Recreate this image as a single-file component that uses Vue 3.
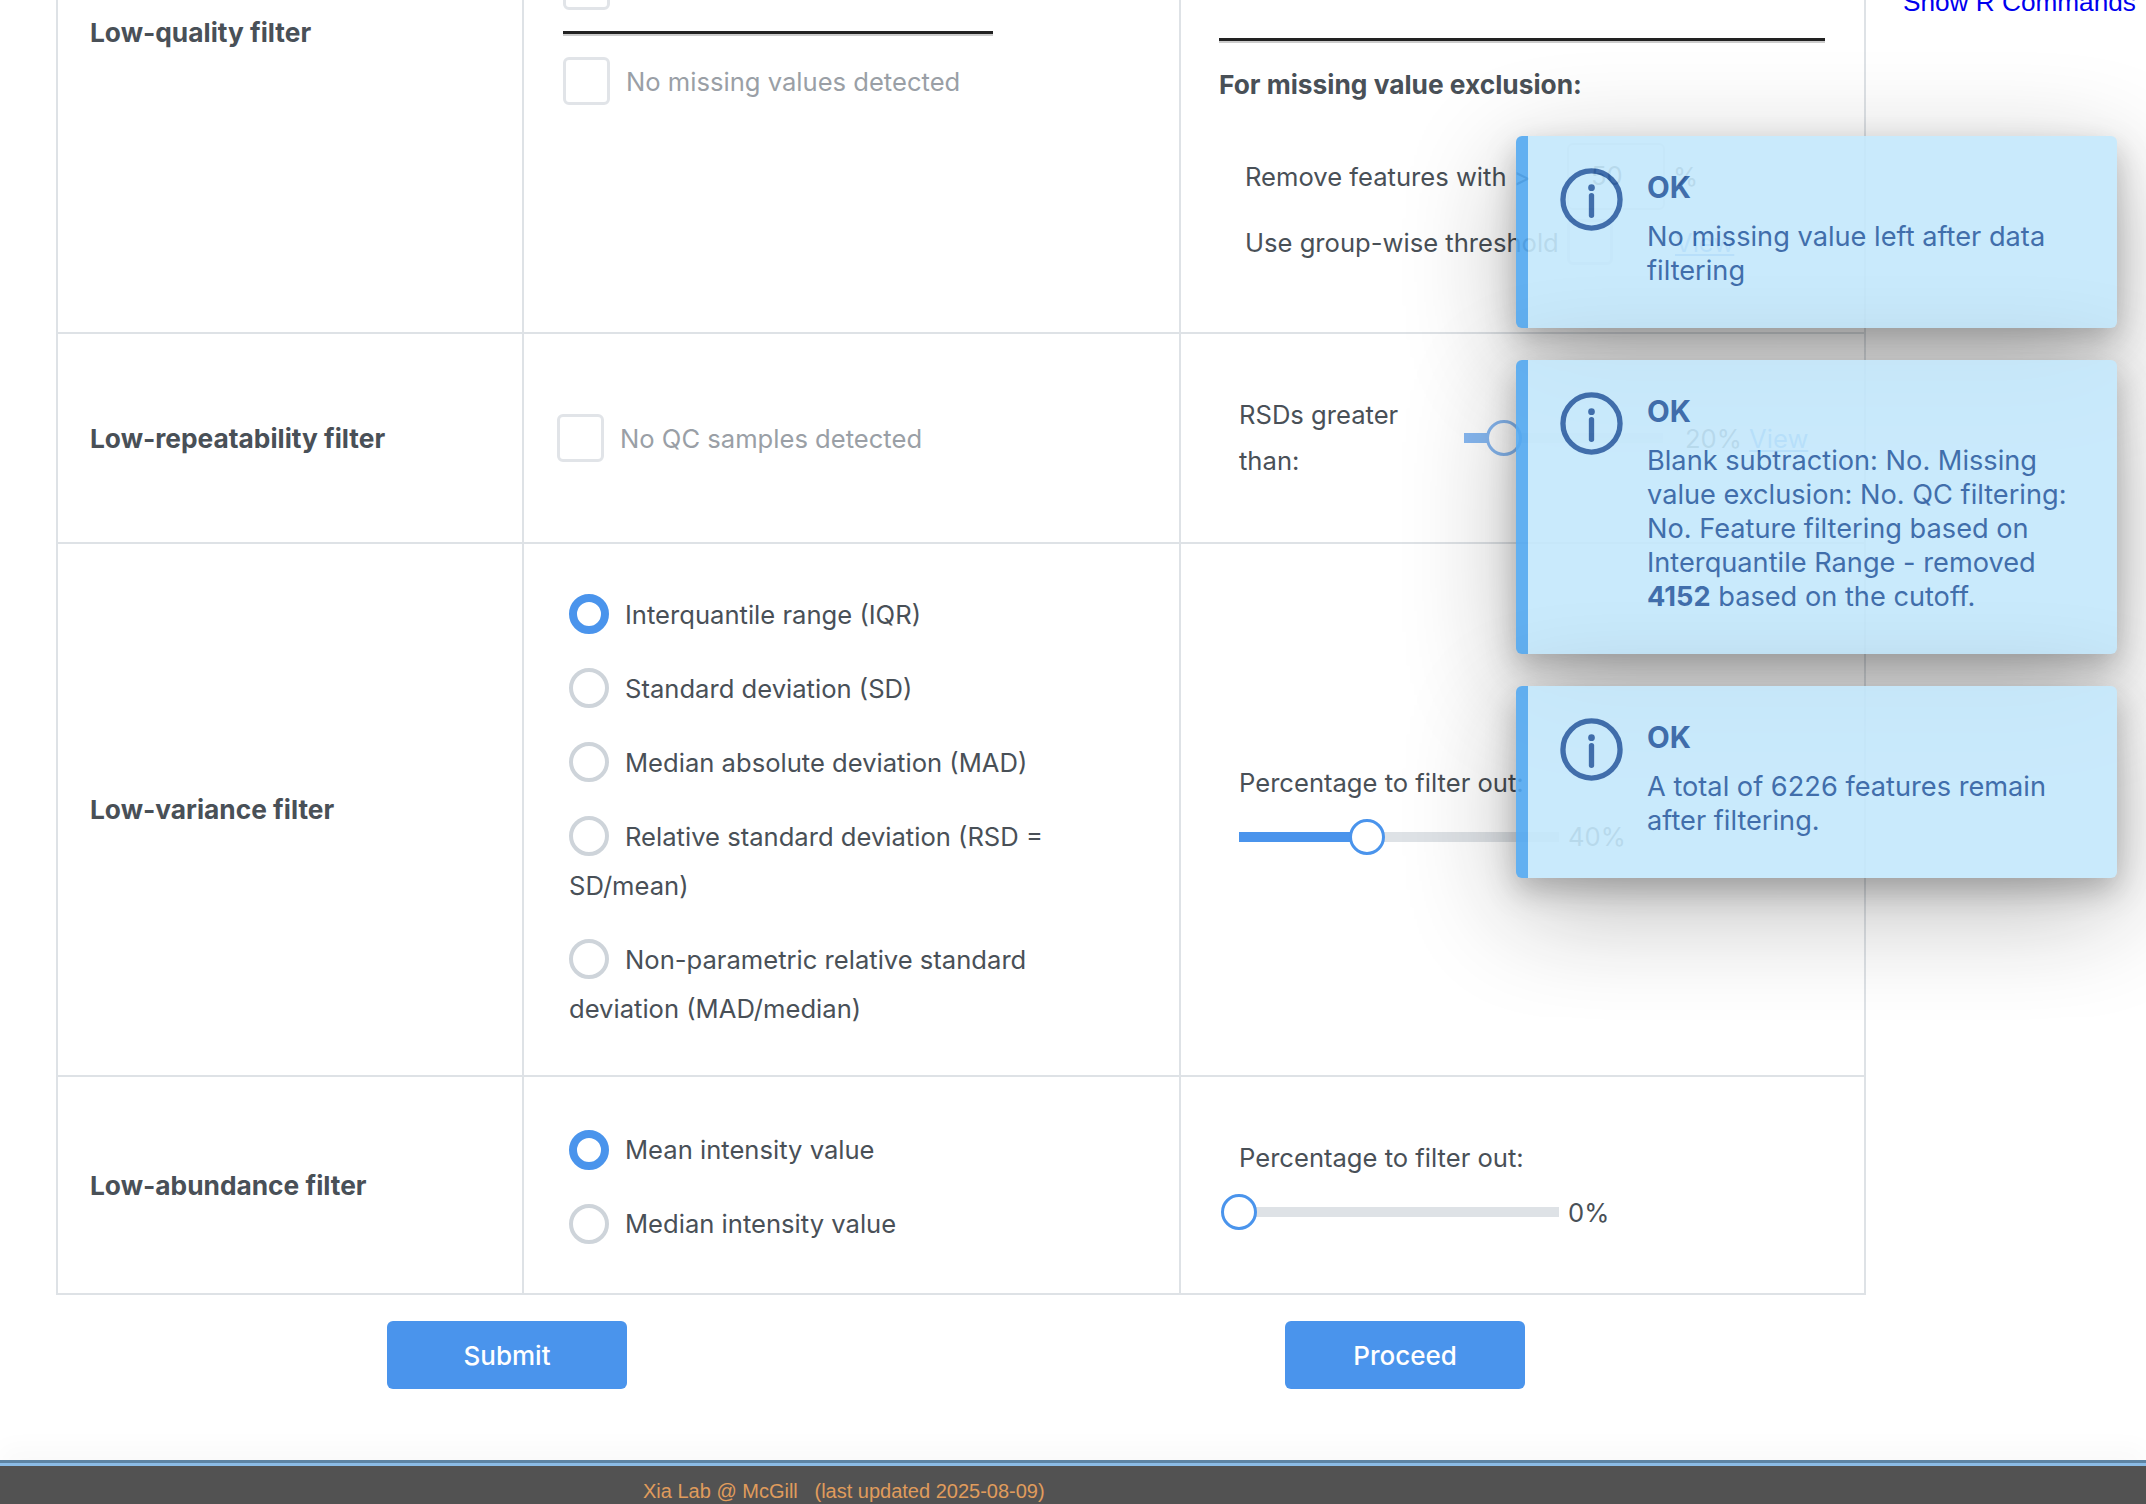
<script setup>
const varianceOptions = [
  { label: 'Interquantile range (IQR)', on: true },
  { label: 'Standard deviation (SD)' },
  { label: 'Median absolute deviation (MAD)' },
  { label: 'Relative standard deviation (RSD = SD/mean)' },
  { label: 'Non-parametric relative standard deviation (MAD/median)' },
]
const abundanceOptions = [
  { label: 'Mean intensity value', on: true },
  { label: 'Median intensity value' },
]
</script>

<template>
  <div class="page">
    <div class="upper">
      <div class="grid">
        <div class="cell name first">Low-quality filter</div>
        <div class="cell mid first-mid">
          <span class="box"></span>
          <div class="rule"></div>
          <div class="check"><span class="box"></span><span>No missing values detected</span></div>
        </div>
        <div class="cell right first-right">
          <div class="rule"></div>
          <div class="heading">For missing value exclusion:</div>
          <div class="opt-row tall"><span class="opt-label">Remove features with &gt;</span><span class="num">50</span><span class="pct">%</span></div>
          <div class="opt-row"><span class="opt-label">Use group-wise threshold</span><span class="box small"></span><a class="view">View</a></div>
        </div>

        <div class="cell name center">Low-repeatability filter</div>
        <div class="cell mid center qc">
          <div class="check"><span class="box"></span><span>No QC samples detected</span></div>
        </div>
        <div class="cell right center rsd">
          <div class="rsd-label">RSDs greater than:</div>
          <div class="slider-row">
            <div class="track short"><div class="fill" style="width:20%"></div><span class="knob" style="left:20%"></span></div>
            <span>20% <a class="view">View</a></span>
          </div>
        </div>

        <div class="cell name center">Low-variance filter</div>
        <div class="cell mid center radios">
          <label v-for="o in varianceOptions" :key="o.label" class="radio-item">
            <span class="radio" :class="{ on: o.on }"></span>{{ o.label }}
          </label>
        </div>
        <div class="cell right center stack">
          <div class="pt-label">Percentage to filter out:</div>
          <div class="slider-row">
            <div class="track"><div class="fill" style="width:40%"></div><span class="knob" style="left:40%"></span></div>
            <span>40%</span>
          </div>
        </div>

        <div class="cell name center">Low-abundance filter</div>
        <div class="cell mid center radios">
          <label v-for="o in abundanceOptions" :key="o.label" class="radio-item">
            <span class="radio" :class="{ on: o.on }"></span>{{ o.label }}
          </label>
        </div>
        <div class="cell right center stack">
          <div class="pt-label">Percentage to filter out:</div>
          <div class="slider-row">
            <div class="track"><div class="fill" style="width:0%"></div><span class="knob" style="left:0%"></span></div>
            <span>0%</span>
          </div>
        </div>
      </div>
      <a class="commands">Show R Commands</a>
    </div>

    <div class="actions">
      <button class="btn">Submit</button>
      <button class="btn">Proceed</button>
    </div>

    <footer class="footer">Xia Lab @ McGill &nbsp; (last updated 2025-08-09)</footer>

    <div class="toasts">
      <div class="toast">
        <svg class="ticon" viewBox="0 0 64 64"><circle cx="32" cy="32" r="29" /><circle class="dot" cx="32" cy="20" r="3.4" /><path d="M32 28v20" /></svg>
        <div><div class="ttitle">OK</div><div class="tmsg">No missing value left after data filtering</div></div>
      </div>
      <div class="toast">
        <svg class="ticon" viewBox="0 0 64 64"><circle cx="32" cy="32" r="29" /><circle class="dot" cx="32" cy="20" r="3.4" /><path d="M32 28v20" /></svg>
        <div><div class="ttitle">OK</div><div class="tmsg">Blank subtraction: No. Missing value exclusion: No. QC filtering: No. Feature filtering based on Interquantile Range - removed <b>4152</b> based on the cutoff.</div></div>
      </div>
      <div class="toast">
        <svg class="ticon" viewBox="0 0 64 64"><circle cx="32" cy="32" r="29" /><circle class="dot" cx="32" cy="20" r="3.4" /><path d="M32 28v20" /></svg>
        <div><div class="ttitle">OK</div><div class="tmsg">A total of 6226 features remain after filtering.</div></div>
      </div>
    </div>
  </div>
</template>

<style>
html, body { margin: 0; height: 1504px; overflow: hidden; background: #fff; }
</style>

<style scoped>
.page {
  position: relative;
  height: 1504px;
  overflow: hidden;
  font-family: Inter, "Noto Sans", sans-serif;
  font-size: 25.6px;
  color: #495057;
}
.upper {
  display: flex;
  margin-top: -60px;
  padding-left: 56px;
}
.grid {
  display: grid;
  grid-template-columns: 466px 657px 683px;
  grid-template-rows: 394px 210px 533px 216px;
  border: solid #dee2e6;
  border-width: 0 2px 2px 2px;
  box-sizing: content-box;
}
.cell {
  border-right: 2px solid #dee2e6;
  border-bottom: 2px solid #dee2e6;
  box-sizing: border-box;
  min-width: 0;
}
.cell:nth-child(3n) { border-right: 0; }
.cell:nth-last-child(-n+3) { border-bottom: 0; }
.name { font-weight: 700; padding-left: 32px; font-size: 26.3px; }
.first { padding-top: 76px; line-height: 34px; }
.center { display: flex; align-items: center; }
.mid { padding-left: 39px; }
.first-mid { padding-top: 22px; }
.box {
  display: block;
  flex: none;
  width: 47px;
  height: 48px;
  box-sizing: border-box;
  border: 3px solid #e1e4e8;
  border-radius: 6px;
}
.box.small { width: 46px; height: 46px; }
.rule {
  height: 3px;
  background: #222;
  box-shadow: 0 2px 0 #ccc;
}
.first-mid .rule { width: 430px; margin: 21px 0 23px; }
.check { display: flex; align-items: center; gap: 16px; color: #9a9fa6; }
.qc { padding-left: 33px; }
.first-right { padding: 98px 0 0 38px; }
.first-right .rule { width: 606px; }
.heading { font-weight: 700; font-size: 26.3px; line-height: 34px; margin: 27px 0 41px; }
.opt-row { display: flex; align-items: center; height: 46px; padding-left: 26px; }
.opt-row.tall { height: 67px; margin-bottom: 9px; }
.opt-label { width: 322px; flex: none; }
.num {
  width: 98px;
  height: 67px;
  box-sizing: border-box;
  border: 2px solid #dee2e6;
  border-radius: 6px;
  padding: 15px 22px;
}
.pct { margin-left: 8px; }
.view { color: #4a94ec; text-decoration: underline; }
.opt-row .view { margin-left: 62px; }
.rsd { padding-left: 58px; }
.rsd-label { width: 225px; flex: none; line-height: 46px; padding-right: 60px; box-sizing: border-box; }
.stack { flex-direction: column; align-items: flex-start; justify-content: center; padding-left: 58px; }
.pt-label { line-height: 34px; margin-bottom: 20px; }
.slider-row { display: flex; align-items: center; gap: 9px; height: 34px; }
.rsd .slider-row { gap: 22px; }
.track {
  position: relative;
  width: 320px;
  height: 10px;
  background: #dee2e6;
}
.track.short { width: 199px; opacity: .65; }
.fill { height: 100%; background: #4a94ec; }
.knob {
  position: absolute;
  top: 50%;
  width: 36px;
  height: 36px;
  box-sizing: border-box;
  margin: -18px 0 0 -18px;
  background: #fff;
  border: 3px solid #4a94ec;
  border-radius: 50%;
}
.radios {
  display: flex;
  flex-direction: column;
  align-items: flex-start;
  justify-content: center;
  gap: 25px;
  padding: 3px 0 0 45px;
}
.radio-item { display: block; width: 540px; line-height: 49px; }
.radio {
  display: inline-block;
  width: 40px;
  height: 40px;
  box-sizing: border-box;
  margin-right: 16px;
  vertical-align: -10.5px;
  border: 4px solid #ced4da;
  border-radius: 50%;
}
.radio.on { border: 8px solid #4a94ec; }
.commands {
  margin: 48px 0 0 37px;
  font-family: "Liberation Sans", Arial, sans-serif;
  font-size: 26.2px;
  line-height: 28px;
  color: #0000ee;
  white-space: nowrap;
}
.actions { display: flex; gap: 658px; padding: 26px 0 0 387px; }
.btn {
  width: 240px;
  height: 68px;
  border: 0;
  border-radius: 6px;
  background: #4a94ec;
  color: #fff;
  font: 500 26px Inter, "Noto Sans", sans-serif;
}
.footer {
  margin-top: 71px;
  height: 45px;
  box-sizing: border-box;
  padding: 12px 0 0 643px;
  background: #525252;
  border-top: 3px solid #5e84a3;
  box-shadow: inset 0 3px 0 #8bbce6, 0 -14px 24px rgba(0, 0, 0, .025);
  color: #e09c5c;
  font-family: "Liberation Sans", Arial, sans-serif;
  font-size: 20px;
  line-height: 32px;
}
.toasts {
  position: absolute;
  top: 136px;
  right: 29px;
  width: 601px;
  display: flex;
  flex-direction: column;
  gap: 32px;
}
.toast {
  display: flex;
  gap: 24px;
  box-sizing: border-box;
  padding: 32px 32px 40px 32px;
  border-left: 12px solid #52a8f0;
  border-radius: 6px;
  background: #c4e8fc;
  opacity: .9;
  color: #2d5fa3;
  box-shadow: 0 12px 30px rgba(0, 0, 0, .26), 0 30px 110px rgba(0, 0, 0, .3);
}
.ticon {
  flex: none;
  width: 63px;
  height: 63px;
  fill: none;
  stroke: currentColor;
  stroke-width: 5.4;
  stroke-linecap: round;
}
.ticon .dot { fill: currentColor; stroke: none; }
.ttitle { font-weight: 700; font-size: 29.5px; line-height: 34px; margin-bottom: 16px; margin-top: 2px; }
.tmsg { font-size: 27.2px; line-height: 34px; }
</style>
